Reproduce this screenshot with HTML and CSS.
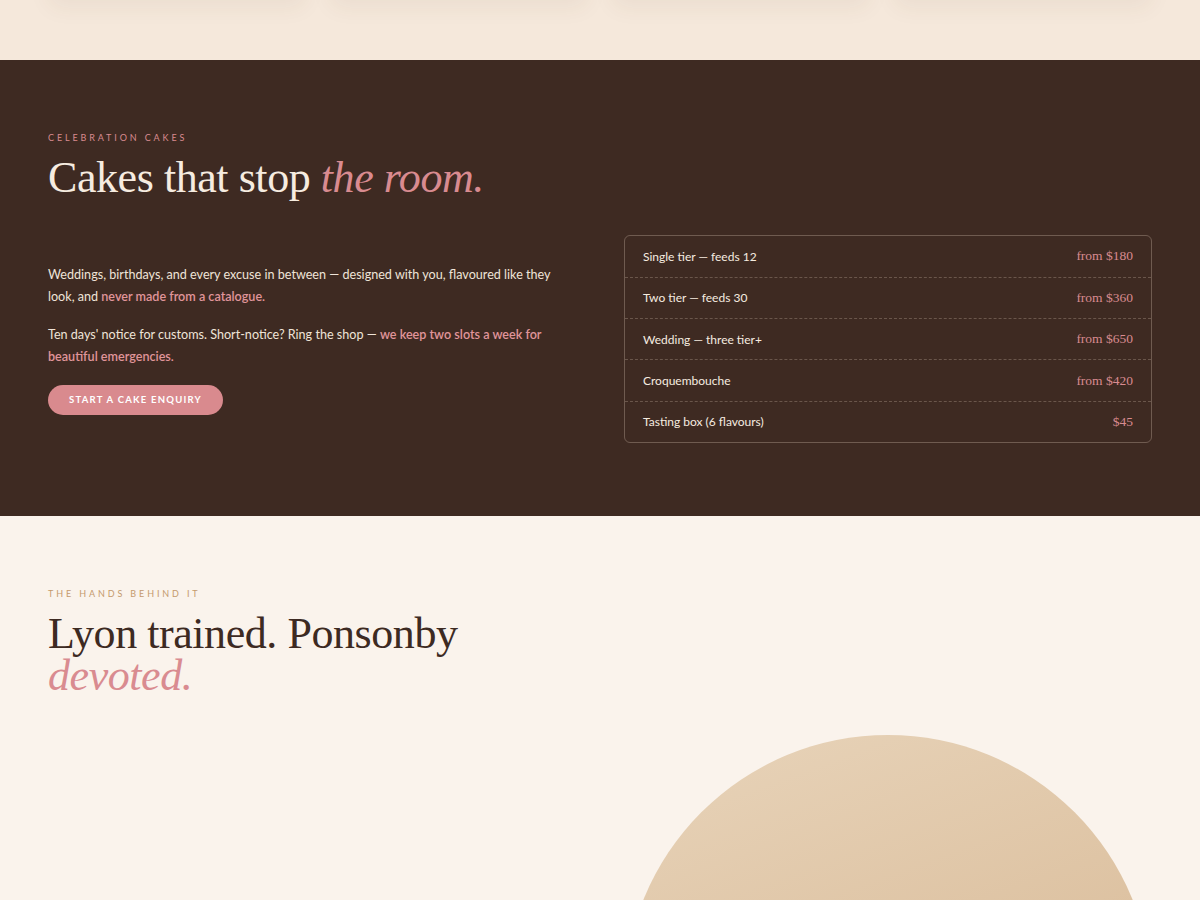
FILE: index.html
```html
<!DOCTYPE html>
<html lang="en">
<head>
    <meta charset="UTF-8">
    <meta name="viewport" content="width=device-width, initial-scale=1.0">
    <title>Celebration cakes</title>
    <link rel="stylesheet" href="styles.css">
</head>
<body>

<!-- === 上の商品カード（スクロール済み） === -->
<section class="band-top">
    <div class="wrap card-row">
        <div class="card"></div>
        <div class="card"></div>
        <div class="card"></div>
        <div class="card"></div>
    </div>
</section>

<!-- === セレブレーションケーキ === -->
<section class="band-dark">
    <div class="wrap">
        <div class="eyebrow eyebrow-pink">Celebration cakes</div>
        <h2 class="display display-light">Cakes that stop <em>the room.</em></h2>

        <div class="split">
            <div class="copy">
                <p>Weddings, birthdays, and every excuse in between — designed with you, flavoured like they look, and <strong>never made from a catalogue.</strong></p>
                <p>Ten days' notice for customs. Short-notice? Ring the shop — <strong>we keep two slots a week for beautiful emergencies.</strong></p>
                <a href="#" class="btn-pill">Start a cake enquiry</a>
            </div>

            <ul class="price-list">
                <li><span>Single tier — feeds 12</span><span class="price">from $180</span></li>
                <li><span>Two tier — feeds 30</span><span class="price">from $360</span></li>
                <li><span>Wedding — three tier+</span><span class="price">from $650</span></li>
                <li><span>Croquembouche</span><span class="price">from $420</span></li>
                <li><span>Tasting box (6 flavours)</span><span class="price">$45</span></li>
            </ul>
        </div>
    </div>
</section>

<!-- === 職人紹介 === -->
<section class="band-light">
    <div class="wrap">
        <div class="eyebrow eyebrow-gold">The hands behind it</div>
        <h2 class="display display-dark display-tight">Lyon trained. Ponsonby<br><em>devoted.</em></h2>

        <div class="split split-about">
            <div></div>
            <div class="portrait"></div>
        </div>
    </div>
</section>

</body>
</html>
```

FILE: styles.css
```css
/* === 基本設定 === */
body {
    margin: 0;
    font-family: "Lato", "Noto Sans", sans-serif;
    background: #faf3ec;
    color: #3d2a22;
}
.wrap {
    max-width: 1104px;
    margin: 0 auto;
}

/* 見出し */
.eyebrow {
    font-size: 9px;
    letter-spacing: 0.32em;
    text-transform: uppercase;
    margin-bottom: 12px;
}
.eyebrow-pink {
    color: #d98b90;
}
.eyebrow-gold {
    color: #c49a6c;
}
.display {
    font-family: "Liberation Serif", "DejaVu Serif", serif;
    font-weight: 400;
    font-size: 44px;
    line-height: 1.05;
    margin: 0;
    letter-spacing: -0.01em;
}
.display-tight {
    line-height: 0.94;
    padding-top: 2px;
}
.display em {
    color: #d98b90;
}
.display-light {
    color: #f6ece0;
}
.display-dark {
    color: #3d2a22;
}

/* === 上の帯 === */
.band-top {
    height: 60px;
    background: #f5e8db;
    overflow: hidden;
}
.card-row {
    display: grid;
    grid-template-columns: repeat(4, 1fr);
    gap: 24px;
    margin-top: -200px;
}
.card {
    height: 200px;
    background: #f1e3d5;
    border-radius: 10px;
    box-shadow: 0 8px 22px rgba(90, 60, 40, 0.06);
}

/* === ダーク帯 === */
.band-dark {
    background: #3e2a22;
    padding: 72px 0 73px;
}
.split {
    display: grid;
    grid-template-columns: 1fr 1fr;
    gap: 48px;
    align-items: center;
    margin-top: 34px;
}
.copy p {
    margin: 0 0 15px;
    font-size: 12.6px;
    line-height: 22.5px;
    color: #efe4d8;
}
.copy strong {
    color: #e0959a;
    font-weight: 600;
}
.btn-pill {
    display: inline-block;
    margin-top: 1px;
    padding: 0 21px;
    height: 30px;
    line-height: 30px;
    border-radius: 15px;
    background: #d98a8e;
    color: #fff;
    font-size: 9.5px;
    font-weight: 700;
    letter-spacing: 0.13em;
    text-transform: uppercase;
    text-decoration: none;
}

/* 価格表 */
.price-list {
    list-style: none;
    margin: 0;
    padding: 0;
    border: 1px solid rgba(240, 220, 200, 0.28);
    border-radius: 6px;
}
.price-list li {
    display: flex;
    justify-content: space-between;
    align-items: center;
    height: 40.4px;
    padding: 0 18px;
    font-size: 12px;
    color: #f6ece0;
    border-top: 1px dashed rgba(240, 220, 200, 0.25);
}
.price-list li:first-child {
    border-top: none;
}
.price {
    font-family: "Liberation Serif", "DejaVu Serif", serif;
    font-size: 13.5px;
    color: #d98b90;
}

/* === ライト帯 === */
.band-light {
    background: #faf3ec;
    padding: 72px 0 0;
}
.split-about {
    margin-top: 39px;
}
.portrait {
    width: 100%;
    aspect-ratio: 1;
    border-radius: 50%;
    background: linear-gradient(160deg, #e8d4ba 0%, #dcc09f 55%, #d4b08a 100%);
}
```
